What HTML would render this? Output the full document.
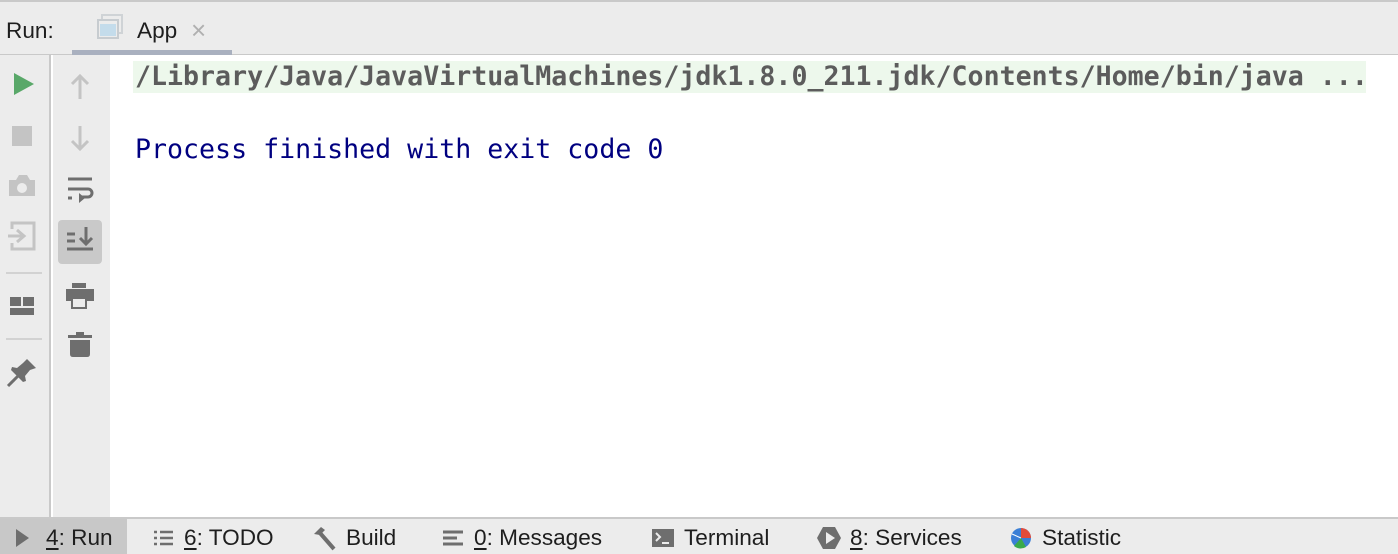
<!DOCTYPE html>
<html><head><style>
*{margin:0;padding:0;box-sizing:border-box}
body{width:1398px;height:554px;overflow:hidden;background:#fff;font-family:"Liberation Sans",sans-serif;position:relative}
.a{position:absolute}
.top{left:0;top:0;width:1398px;height:55px;background:#ececec;border-top:2px solid #c9c9c9;border-bottom:1px solid #c9c9c9}
.col1{left:0;top:55px;width:51px;height:462px;background:#ececec;border-right:2px solid #c9c9c9}
.col2{left:53px;top:55px;width:57px;height:462px;background:#ececec}
.bot{left:0;top:517px;width:1398px;height:37px;background:#ececec;border-top:2px solid #c9c9c9}
.bt{position:absolute;top:525px;font-size:22.6px;color:#1e1e1e}
.mono{font-family:"DejaVu Sans Mono","Liberation Mono",monospace;font-size:26.6px;position:absolute;white-space:pre}
u{text-decoration:underline;text-underline-offset:3px}
</style></head><body>
<div class="a top"></div>
<div class="a" style="left:6px;top:18px;font-size:22.6px;color:#1e1e1e">Run:</div>
<svg class="a" style="left:96px;top:14px" width="32" height="28"><rect x="6" y="1" width="20" height="18" fill="none" stroke="#cfd3d6" stroke-width="2"/><rect x="2" y="6" width="20" height="18" fill="#ececec" stroke="#c7ccd0" stroke-width="2"/><rect x="4" y="10" width="16" height="12" fill="#c4dceb"/></svg>
<div class="a" style="left:137px;top:18px;font-size:22.6px;color:#1e1e1e">App</div>
<div class="a" style="left:191px;top:15px;font-size:26px;color:#b0b0b0">×</div>
<div class="a" style="left:72px;top:50px;width:160px;height:5px;background:#a9b0bf"></div>
<div class="a col1"></div><div class="a col2"></div>
<svg class="a" style="left:0;top:55px" width="110" height="340">
<polygon points="14,18 14,40 34,29" fill="#59a869"/>
<rect x="12" y="71" width="20" height="20" fill="#c4c4c4"/>
<path d="M9 125h26v16H9z M16 125l3-5h8l3 5" fill="#c4c4c4"/><circle cx="22" cy="133" r="5" fill="#ececec"/>
<path d="M12 174v-6h22v26H12v-6" fill="none" stroke="#c4c4c4" stroke-width="3"/><path d="M8 181h14M17 175l7 6-7 6" fill="none" stroke="#c4c4c4" stroke-width="3"/>
<rect x="6" y="217" width="36" height="2" fill="#d2d2d2"/>
<rect x="10" y="242" width="11" height="9" fill="#6e6e6e"/><rect x="23" y="242" width="11" height="9" fill="#6e6e6e"/><rect x="10" y="253" width="24" height="7" fill="#6e6e6e"/>
<rect x="6" y="283" width="36" height="2" fill="#d2d2d2"/>
<path d="M8 331l10-10" stroke="#6e6e6e" stroke-width="3"/><path d="M27 304l9 9-6 2-5 6 1 5-3 1-12-12 1-3 5 1 6-5z" fill="#6e6e6e"/>
<path d="M80 44V22M72 29l8-8 8 8" fill="none" stroke="#c4c4c4" stroke-width="3"/>
<path d="M80 71v22M72 86l8 8 8-8" fill="none" stroke="#c4c4c4" stroke-width="3"/>
<path d="M68 124h24M68 134h20a4 4 0 0 1 0 8h-8M68 143h4" fill="none" stroke="#6e6e6e" stroke-width="3"/><polygon points="79,138 85,143 79,148" fill="#6e6e6e"/>
<rect x="58" y="165" width="44" height="44" rx="4" fill="#c9c9c9"/>
<path d="M67 179h8M67 186h8M67 194h26M86 172v17M80 183l6 6 6-6" fill="none" stroke="#6e6e6e" stroke-width="3"/>
<rect x="72" y="228" width="14" height="5" fill="#6e6e6e"/><rect x="66" y="234" width="28" height="12" fill="#6e6e6e"/><rect x="72" y="243" width="14" height="10" fill="#ececec" stroke="#6e6e6e" stroke-width="2"/>
<rect x="68" y="280" width="24" height="3" fill="#6e6e6e"/><rect x="76" y="277" width="8" height="3" fill="#6e6e6e"/><path d="M70 285h20v14q0 3-3 3H73q-3 0-3-3z" fill="#6e6e6e"/>
</svg>
<div class="a" style="left:133px;top:61px;width:1233px;height:32px;background:#edf8ec"></div>
<div class="mono" style="left:135px;top:61px;font-weight:bold;color:#5c5c5c">/Library/Java/JavaVirtualMachines/jdk1.8.0_211.jdk/Contents/Home/bin/java ...</div>
<div class="mono" style="left:135px;top:134px;color:#000080">Process finished with exit code 0</div>
<div class="a bot"></div>
<div class="a" style="left:0;top:519px;width:127px;height:35px;background:#c8c8c8"></div>
<svg class="a" style="left:14px;top:528px" width="16" height="20"><polygon points="2,1 2,19 15,10" fill="#6e6e6e"/></svg>
<div class="bt" style="left:46px"><u>4</u>: Run</div>
<svg class="a" style="left:152px;top:528px" width="24" height="20"><path d="M2 4h3M8 4h13M2 10h3M8 10h13M2 16h3M8 16h13" stroke="#6e6e6e" stroke-width="2.5"/></svg>
<div class="bt" style="left:184px"><u>6</u>: TODO</div>
<svg class="a" style="left:311px;top:525px" width="28" height="26"><path d="M3 9l7-7 4 3-5 5z" fill="#6e6e6e"/><path d="M9 8l14 16" stroke="#6e6e6e" stroke-width="4"/></svg>
<div class="bt" style="left:346px">Build</div>
<svg class="a" style="left:441px;top:528px" width="24" height="20"><path d="M2 4h20M2 10h14M2 16h20" stroke="#6e6e6e" stroke-width="3"/></svg>
<div class="bt" style="left:474px"><u>0</u>: Messages</div>
<svg class="a" style="left:651px;top:528px" width="24" height="20"><rect x="1" y="1" width="22" height="18" fill="#6e6e6e"/><path d="M5 5l4 4-4 4M11 15h7" stroke="#ececec" stroke-width="2" fill="none"/></svg>
<div class="bt" style="left:684px">Terminal</div>
<svg class="a" style="left:816px;top:526px" width="26" height="24"><polygon points="7,1 19,1 25,12 19,23 7,23 1,12" fill="#6e6e6e"/><polygon points="10,6 10,18 19,12" fill="#ececec"/></svg>
<div class="bt" style="left:850px"><u>8</u>: Services</div>
<svg class="a" style="left:1009px;top:525px" width="24" height="26"><circle cx="12" cy="13" r="10" fill="#3b7fd6"/><path d="M12 3a10 10 0 0 1 10 10L12 13z" fill="#e34b3a"/><path d="M12 13L5 21a10 10 0 0 0 12 1z" fill="#3aaa4a"/><path d="M12 13L3 9" stroke="#fff" stroke-width="1"/></svg>
<div class="bt" style="left:1042px">Statistic</div>
</body></html>
